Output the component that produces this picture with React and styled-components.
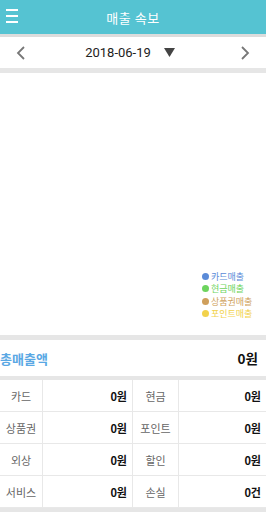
import React from "react";
import styled, { createGlobalStyle } from "styled-components";

const Global = createGlobalStyle`
  html, body { margin: 0; padding: 0; background: #fff; }
  body { font-family: "Noto Sans CJK KR", "Noto Sans", Roboto, sans-serif; }
  * { box-sizing: border-box; }
`;

const Page = styled.div`
  width: 266px;
  height: 512px;
  display: flex;
  flex-direction: column;
  background: #e6e6e6;
  overflow: hidden;
`;

const Header = styled.div`
  height: 34px;
  background: #55c3d2;
  display: flex;
  align-items: center;
  justify-content: center;
  position: relative;
  border-bottom: 3px solid #dcdcdc;
  box-sizing: content-box;
`;

const Menu = styled.div`
  position: absolute;
  left: 6px;
  top: 9px;
  width: 12px;
  display: flex;
  flex-direction: column;
  gap: 4px;
  span { display: block; height: 2px; background: #fff; }
`;

const Title = styled.div`
  color: #fff;
  font-size: 13px;
  letter-spacing: 0.5px;
`;

const DateBar = styled.div`
  height: 31px;
  background: #fff;
  display: flex;
  align-items: center;
  justify-content: space-between;
  padding: 0 16px;
  margin-bottom: 5px;
`;

const DateText = styled.div`
  display: flex;
  align-items: center;
  gap: 13px;
  font-family: Roboto, "Noto Sans", sans-serif;
  font-size: 13px;
  color: #222;
  margin-right: 6px;
`;

const Chart = styled.div`
  height: 262px;
  background: #fff;
  display: flex;
  flex-direction: column;
  justify-content: flex-end;
  align-items: flex-end;
  padding: 0 12px 16px 0;
  margin-bottom: 5px;
`;

const Legend = styled.div`
  display: flex;
  flex-direction: column;
  gap: 1.5px;
  width: 52px;
`;

const LegendItem = styled.div`
  display: flex;
  align-items: center;
  gap: 2px;
  font-size: 9px;
  line-height: 11px;
  color: ${(p) => p.$c};
  white-space: nowrap;
  &::before {
    content: "";
    width: 7px;
    height: 7px;
    border-radius: 50%;
    background: ${(p) => p.$c};
  }
`;

const TotalRow = styled.div`
  height: 36px;
  background: #fff;
  display: flex;
  align-items: center;
  justify-content: space-between;
  padding: 0 8px 0 0;
  margin-bottom: 4px;
`;

const TotalLabel = styled.div`
  color: #5aa8e4;
  font-size: 13px;
  font-weight: 700;
`;

const TotalValue = styled.div`
  color: #111;
  font-size: 13.5px;
  font-weight: 700;
`;

const Table = styled.div`
  display: grid;
  grid-template-columns: 43px 90px 46px 87px;
  grid-auto-rows: 32px;
  background: #fff;
`;

const Cell = styled.div`
  display: flex;
  align-items: center;
  justify-content: ${(p) => (p.$value ? "flex-end" : "center")};
  padding-right: ${(p) => (p.$value ? "5px" : "0")};
  font-size: 11px;
  font-weight: ${(p) => (p.$value ? 700 : 400)};
  color: ${(p) => (p.$value ? "#111" : "#666")};
  border-bottom: 1px solid #e8e8e8;
  border-right: ${(p) => (p.$last ? "none" : "1px solid #e8e8e8")};
`;

const Chevron = ({ dir }) => (
  <svg width="10" height="14" viewBox="0 0 10 14">
    <path
      d={dir === "left" ? "M8 1 L2 7 L8 13" : "M2 1 L8 7 L2 13"}
      fill="none"
      stroke="#777"
      strokeWidth="1.8"
    />
  </svg>
);

const rows = [
  ["카드", "0원", "현금", "0원"],
  ["상품권", "0원", "포인트", "0원"],
  ["외상", "0원", "할인", "0원"],
  ["서비스", "0원", "손실", "0건"],
];

export default function App() {
  return (
    <Page>
      <Global />
      <Header>
        <Menu>
          <span />
          <span />
          <span />
        </Menu>
        <Title>매출 속보</Title>
      </Header>
      <DateBar>
        <Chevron dir="left" />
        <DateText>
          2018-06-19
          <svg width="11" height="9" viewBox="0 0 11 9">
            <path d="M0 0 L11 0 L5.5 9 Z" fill="#444" />
          </svg>
        </DateText>
        <Chevron dir="right" />
      </DateBar>
      <Chart>
        <Legend>
          <LegendItem $c="#5b8bd8">카드매출</LegendItem>
          <LegendItem $c="#6dd45e">현금매출</LegendItem>
          <LegendItem $c="#cf9f5c">상품권매출</LegendItem>
          <LegendItem $c="#f2d24c">포인트매출</LegendItem>
        </Legend>
      </Chart>
      <TotalRow>
        <TotalLabel>총매출액</TotalLabel>
        <TotalValue>0원</TotalValue>
      </TotalRow>
      <Table>
        {rows.map((r, i) =>
          r.map((t, j) => (
            <Cell key={`${i}-${j}`} $value={j % 2 === 1} $last={j === 3}>
              {t}
            </Cell>
          ))
        )}
      </Table>
    </Page>
  );
}
